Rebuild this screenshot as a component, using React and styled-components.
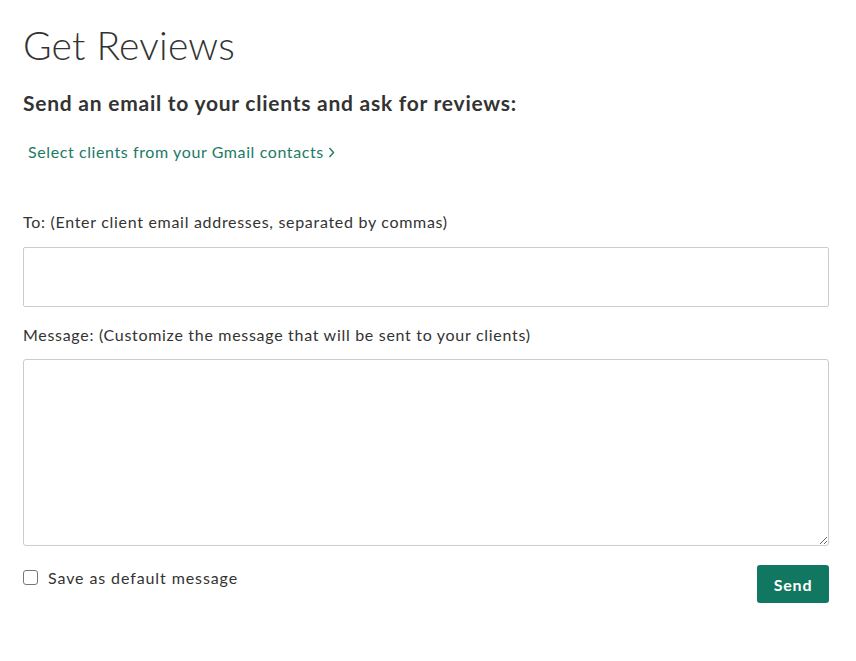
import React, { useState } from "react"
import styled, { createGlobalStyle } from "styled-components"

const GlobalStyle = createGlobalStyle`
  body {
    margin: 0;
    background: #fff;
    font-family: Lato, "Liberation Sans", sans-serif;
    color: #333;
  }
`

const Page = styled.div`
  padding: 22px 27px 40px 23px;
  display: flex;
  flex-direction: column;
`

const Title = styled.h1`
  margin: 0;
  font-size: 39px;
  font-weight: 300;
  line-height: 46px;
  letter-spacing: 0.2px;
  color: #333;
`

const Subtitle = styled.h2`
  margin: 22px 0 0;
  font-size: 21px;
  font-weight: 700;
  line-height: 26px;
  letter-spacing: 0.75px;
  color: #333;
`

const GmailLink = styled.a`
  margin: 25px 0 0 5px;
  font-size: 16px;
  line-height: 22px;
  letter-spacing: 0.6px;
  color: #1c7a65;
  text-decoration: none;
  display: inline-flex;
  align-items: center;
  gap: 4px;
  align-self: flex-start;
  cursor: pointer;
`

const Label = styled.label`
  display: block;
  margin-top: ${p => p.$top}px;
  font-size: 16px;
  line-height: 22px;
  letter-spacing: 0.7px;
  color: #333;
`

const Field = styled.input`
  box-sizing: border-box;
  margin-top: 14px;
  width: 100%;
  height: 60px;
  border: 1px solid #ccc;
  border-radius: 2px;
  padding: 8px 12px;
  font: inherit;
  outline: none;
`

const Area = styled.textarea`
  box-sizing: border-box;
  margin-top: 13px;
  width: 100%;
  height: 187px;
  border: 1px solid #ccc;
  border-radius: 3px;
  padding: 8px 12px;
  font: inherit;
  outline: none;
  display: block;
`

const Footer = styled.div`
  display: flex;
  justify-content: space-between;
  align-items: flex-start;
  margin-top: 19px;
`

const CheckRow = styled.label`
  display: flex;
  align-items: center;
  gap: 10px;
  margin-top: 3px;
  font-size: 16px;
  letter-spacing: 0.9px;
  color: #333;
  cursor: pointer;
`

const Check = styled.input`
  margin: 0;
  width: 15px;
  height: 15px;
  appearance: none;
  border: 1px solid #777;
  border-radius: 3px;
  background: #fff;
`

const SendButton = styled.button`
  width: 72px;
  height: 38px;
  border: 0;
  border-radius: 3px;
  background: #127760;
  color: #fff;
  font-family: inherit;
  font-size: 16px;
  font-weight: 700;
  letter-spacing: 0.8px;
  cursor: pointer;
`

const App = () => {
  const [to, setTo] = useState("")
  const [message, setMessage] = useState("")
  const [saveDefault, setSaveDefault] = useState(false)

  return (
    <>
      <GlobalStyle />
      <Page>
        <Title>Get Reviews</Title>
        <Subtitle>Send an email to your clients and ask for reviews:</Subtitle>
        <GmailLink>
          Select clients from your Gmail contacts
          <svg width="7" height="11" viewBox="0 0 7 11" fill="none">
            <path d="M1.5 1 L5.5 5.5 L1.5 10" stroke="#1c7a65" strokeWidth="1.4" />
          </svg>
        </GmailLink>
        <Label $top={48}>To: (Enter client email addresses, separated by commas)</Label>
        <Field value={to} onChange={e => setTo(e.target.value)} />
        <Label $top={17}>Message: (Customize the message that will be sent to your clients)</Label>
        <Area value={message} onChange={e => setMessage(e.target.value)} />
        <Footer>
          <CheckRow>
            <Check type="checkbox" checked={saveDefault} onChange={() => setSaveDefault(!saveDefault)} />
            Save as default message
          </CheckRow>
          <SendButton>Send</SendButton>
        </Footer>
      </Page>
    </>
  )
}

export default App
